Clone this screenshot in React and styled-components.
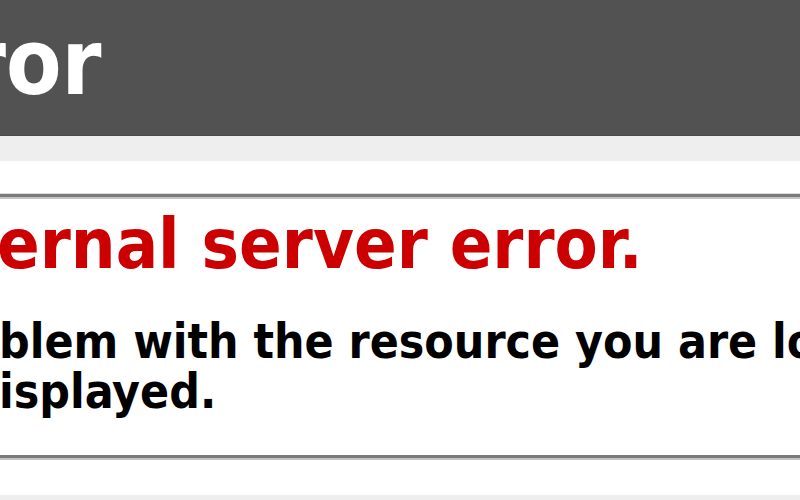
import styled, { createGlobalStyle } from 'styled-components';

// Estilos globais da página
const GlobalStyle = createGlobalStyle`
    html, body {
        margin: 0;
        padding: 0;
        width: 800px;
        height: 500px;
        overflow: hidden;
        background: #EEEEEE;
        font-family: 'DejaVu Sans Condensed', 'DejaVu Sans', Verdana, sans-serif;
    }
`;

const Header = styled.div`
    height: 136px;
    box-sizing: border-box;
    padding-top: 18px;
    background-color: #525252;
    border-bottom: 1px solid #4a4a4a;
    overflow: hidden;
`;

const Titulo = styled.h1`
    margin: 0 0 0 -34px;
    font-size: 90px;
    line-height: 1;
    font-weight: bold;
    color: #FFFFFF;
    white-space: nowrap;
`;

const Conteudo = styled.div`
    margin-top: 25px;
    background: #FFFFFF;
    padding: 33px 0 37px 0;
    overflow: hidden;
`;

const Fieldset = styled.div`
    border-top: 3px solid #7a7a7a;
    border-bottom: 3px solid #7a7a7a;
    box-shadow: 0 -1px 0 #dddddd, 0 2px 0 #c4c4c4, inset 0 2px 0 #c4c4c4;
    padding: 7px 0 38px 0;
`;

const Erro = styled.h2`
    margin: 0 0 0 -3px;
    font-size: 70px;
    line-height: 80px;
    font-weight: bold;
    color: #CC0000;
    white-space: nowrap;
`;

const Mensagem = styled.h3`
    margin: 33px 0 0 -1px;
    font-size: 47.7px;
    line-height: 50px;
    font-weight: bold;
    color: #000000;
    white-space: nowrap;
`;

const App = () => {
    return (
        <>
            <GlobalStyle />
            <Header>
                <Titulo>ror</Titulo>
            </Header>
            <Conteudo>
                <Fieldset>
                    <Erro>ernal server error.</Erro>
                    <Mensagem>
                        blem with the resource you are looking for, and it cannot be
                        <br />
                        isplayed.
                    </Mensagem>
                </Fieldset>
            </Conteudo>
        </>
    );
};

export default App;
